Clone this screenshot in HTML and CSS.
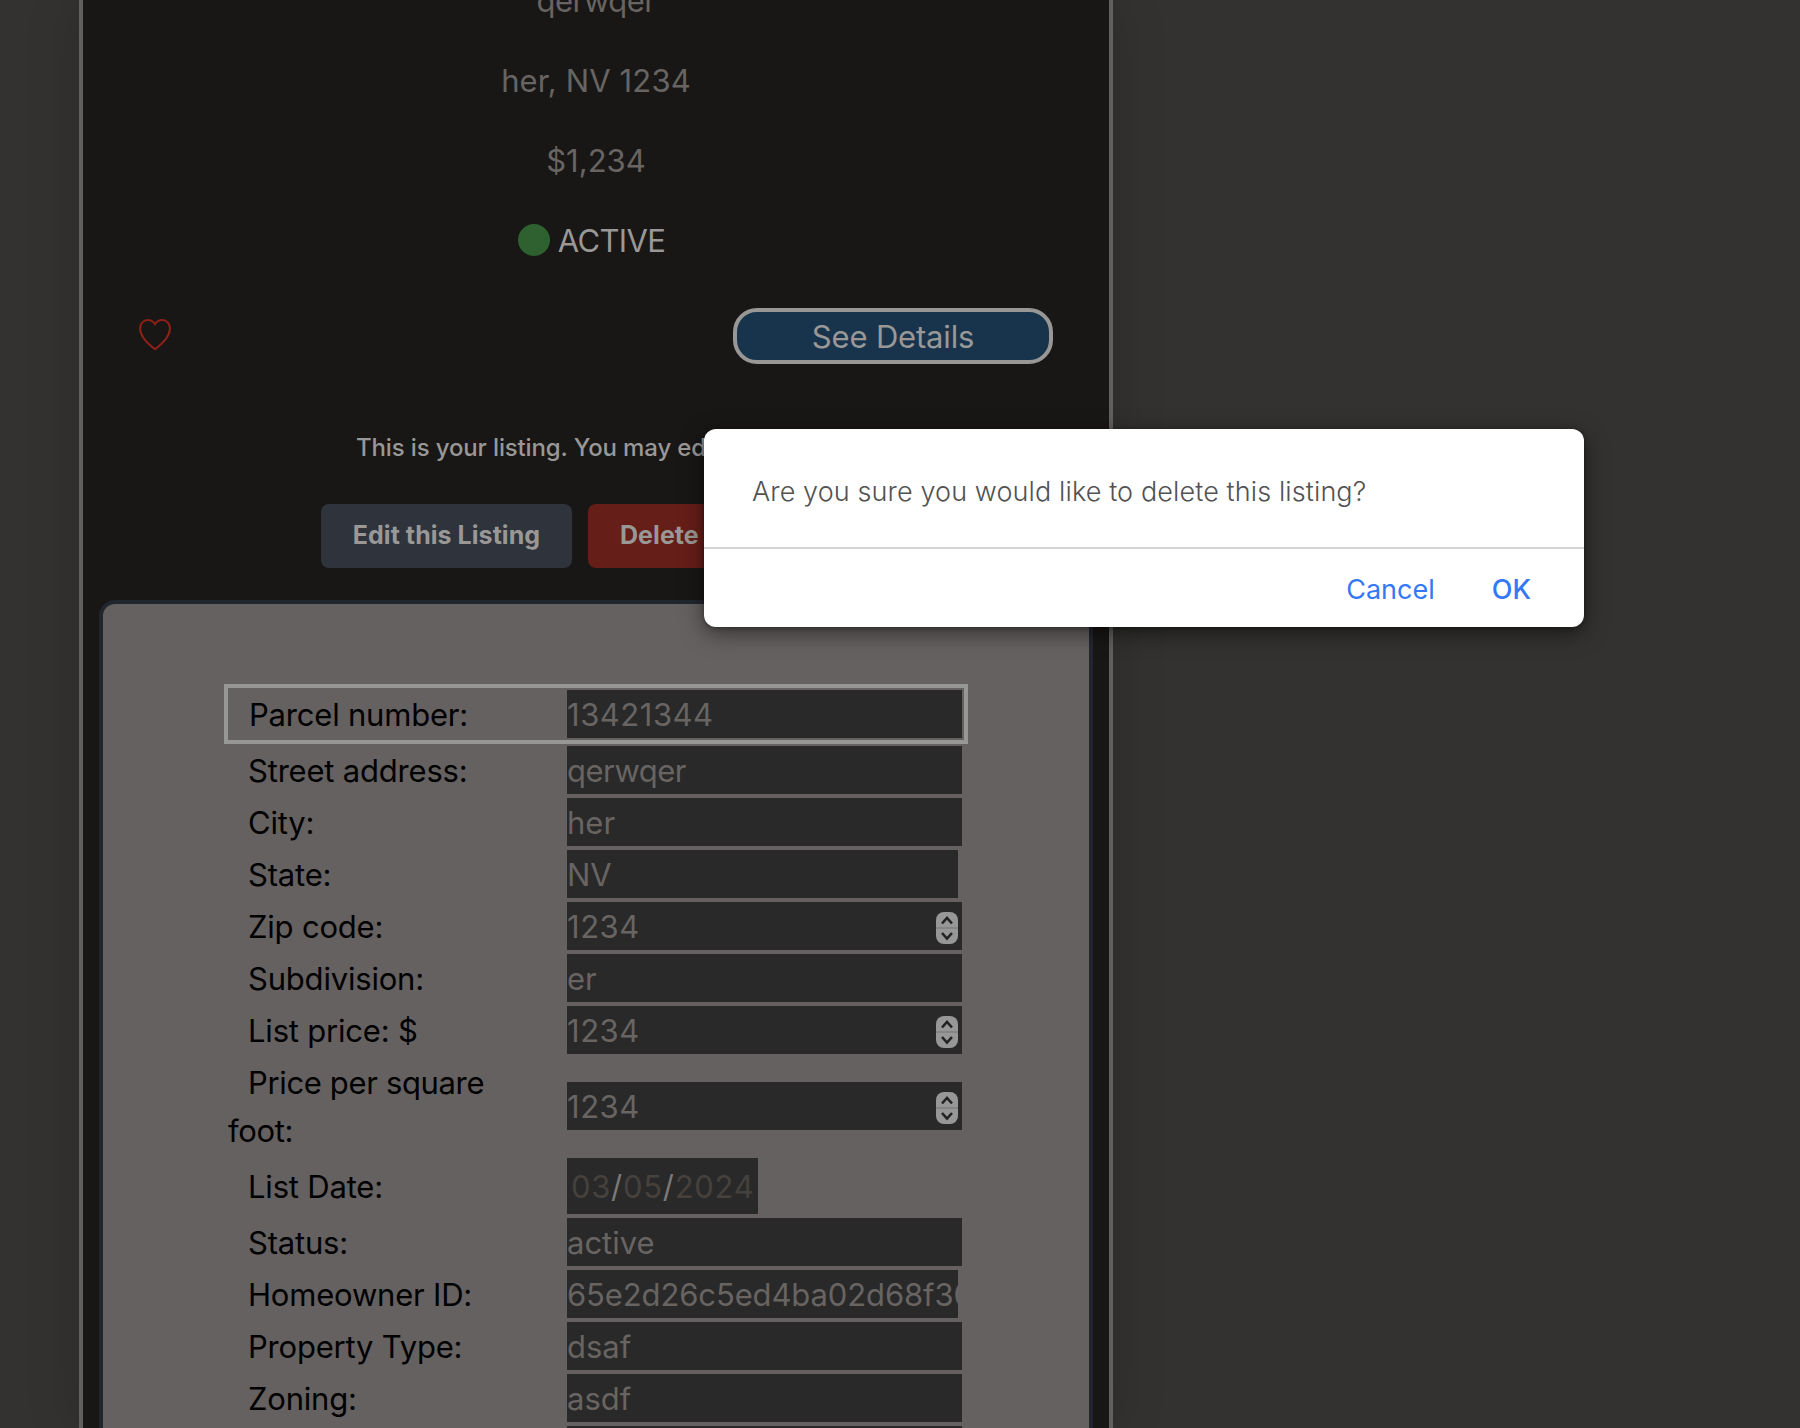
FILE: index.html
```
<!DOCTYPE html>
<html lang="en">
<head>
<meta charset="utf-8">
<title>Listing</title>
<link rel="stylesheet" href="styles.css">
</head>
<body>
<main class="card">
  <section class="summary">
    <p class="tight">qerwqer</p>
    <p class="place">her, NV 1234</p>
    <p>$1,234</p>
    <p class="status"><span class="dot"></span><span>ACTIVE</span></p>
  </section>
  <div class="actions">
    <svg class="heart" viewBox="0 0 34 34" width="34" height="34"><path d="M17 32.2 C12.5 28.8 2.1 20.5 2.1 11.4 C2.1 6.4 5.4 3 9.8 3 C13 3 15.5 4.6 17 7.2 C18.5 4.6 21 3 24.2 3 C28.6 3 31.9 6.4 31.9 11.4 C31.9 20.5 21.5 28.8 17 32.2 Z"/></svg>
    <button class="details">See Details</button>
  </div>
  <p class="note"><span>This is your listing. You may edit or delete it.</span></p>
  <div class="owner">
    <button class="btn edit">Edit this Listing</button>
    <button class="btn delete">Delete this Listing</button>
  </div>
  <form class="form">
    <div class="row focused"><label>Parcel number:</label><span class="field num">13421344</span></div>
    <div class="row"><label>Street address:</label><span class="field tight">qerwqer</span></div>
    <div class="row"><label>City:</label><span class="field">her</span></div>
    <div class="row"><label>State:</label><span class="field short">NV</span></div>
    <div class="row"><label>Zip code:</label><span class="field num">1234<svg class="spin" viewBox="0 0 22 32"><rect width="22" height="32" rx="8"/><path class="split" d="M0 16H22"/><path d="M6 11.5L11 6L16 11.5M6 21L11 26.5L16 21"/></svg></span></div>
    <div class="row"><label>Subdivision:</label><span class="field">er</span></div>
    <div class="row"><label>List price: $</label><span class="field num">1234<svg class="spin" viewBox="0 0 22 32"><rect width="22" height="32" rx="8"/><path class="split" d="M0 16H22"/><path d="M6 11.5L11 6L16 11.5M6 21L11 26.5L16 21"/></svg></span></div>
    <div class="row"><label class="long">Price per square<br>foot:</label><span class="field num">1234<svg class="spin" viewBox="0 0 22 32"><rect width="22" height="32" rx="8"/><path class="split" d="M0 16H22"/><path d="M6 11.5L11 6L16 11.5M6 21L11 26.5L16 21"/></svg></span></div>
    <div class="row"><label>List Date:</label><span class="field date">03<i>/</i>05<i>/</i>2024</span></div>
    <div class="row"><label>Status:</label><span class="field">active</span></div>
    <div class="row"><label>Homeowner ID:</label><span class="field short id">65e2d26c5ed4ba02d68f30</span></div>
    <div class="row"><label>Property Type:</label><span class="field">dsaf</span></div>
    <div class="row"><label>Zoning:</label><span class="field">asdf</span></div>
    <div class="row"><label></label><span class="field"></span></div>
  </form>
</main>
<div class="dialog" role="alertdialog">
  <p class="question">Are you sure you would like to delete this listing?</p>
  <div class="choices"><button>Cancel</button><button class="ok">OK</button></div>
</div>
</body>
</html>
```
FILE: styles.css
```
* { box-sizing: border-box; }
html, body { height: 100%; }
body {
  margin: 0;
  overflow: hidden;
  position: relative;
  background: #333230;
  color: #686462;
  font: 420 31px/48px Inter, "Noto Sans", sans-serif;
}
p { margin: 0; }
button { border: 0; margin: 0; padding: 0; background: none; font: inherit; color: inherit; white-space: nowrap; }

.card {
  width: 1034px;
  height: 1428px;
  margin-left: 79px;
  border: solid #61605f;
  border-width: 0 4px;
  background: #181715;
  box-shadow: 0 0 50px rgba(0, 0, 0, .16);
  overflow: hidden;
}
.summary { display: flex; flex-direction: column; align-items: center; gap: 32px; margin-top: -23px; }
.place { letter-spacing: .15px; }
.status { display: flex; align-items: center; gap: 8px; padding-right: 9px; color: #999897; letter-spacing: -.65px; }
.dot { width: 32px; height: 32px; margin-bottom: 2px; border-radius: 50%; background: #2e6030; }

.actions { display: flex; justify-content: space-between; align-items: center; height: 56px; margin: 43px 56px 0 55px; }
.heart { display: block; margin-bottom: 4px; fill: none; stroke: #8e2018; stroke-width: 2; }
.details {
  width: 320px;
  height: 56px;
  padding-top: 1px;
  border: 4px solid #999795;
  border-radius: 24px;
  background: #18344d;
  color: #999897;
  letter-spacing: -.18px;
}
.note { width: 478px; margin: 60px 0 0 273px; color: #999897; font-size: 24px; font-weight: 450; letter-spacing: -.14px; white-space: nowrap; }
.owner { display: flex; gap: 16px; margin: 32px 0 0 238px; }
.btn { height: 64px; padding: 0 0 2px; border-radius: 8px; color: #999897; font-size: 25px; font-weight: 700; letter-spacing: .05px; }
.edit { width: 251px; background: #2f333b; }
.delete { width: 283px; background: #661e18; }

.form {
  width: 994px;
  height: 900px;
  margin: 32px 0 0 16px;
  padding: 80px 0 0 121px;
  border: 4px solid #22272f;
  border-radius: 16px;
  background: #656160;
}
.row { display: grid; grid-template-columns: 339px 395px; align-items: center; padding: 2px 0 2px 4px; }
.focused { width: 744px; border: 4px solid #979796; padding-left: 0; }
label { margin-bottom: -1px; padding-top: 1px; color: #000; text-indent: 20px; letter-spacing: -.2px; }
.focused label { padding-left: 1px; }
.long { letter-spacing: -.35px; }
.field {
  display: flex;
  align-items: center;
  width: 395px;
  height: 48px;
  padding-top: 2px;
  overflow: hidden;
  background: #292929;
  white-space: nowrap;
}
.num { letter-spacing: .52px; }
.tight { letter-spacing: -.5px; }
.short { width: 391px; }
.id { letter-spacing: -.12px; }
.date { width: 191px; height: 56px; padding-left: 4px; color: #46413d; letter-spacing: .7px; }
.date i { font-style: normal; color: #7b7876; }
.spin { width: 22px; height: 32px; margin: 2px 4px 0 auto; fill: none; stroke: #222; stroke-width: 2.6; }
.spin rect { fill: #979797; stroke: none; }
.spin .split { stroke: #858585; stroke-width: 2; }

.dialog {
  position: absolute;
  left: 704px;
  top: 429px;
  width: 880px;
  height: 198px;
  border-radius: 12px;
  background: #fff;
  box-shadow: 0 6px 22px rgba(0, 0, 0, .5), 0 1px 4px rgba(0, 0, 0, .3);
  font-size: 27px;
}
.question { height: 120px; padding: 39px 48px 0; border-bottom: 2px solid #d3d3d3; color: #525252; font-weight: 360; letter-spacing: .11px; white-space: nowrap; }
.choices { display: flex; justify-content: flex-end; gap: 57px; padding: 17px 53px 0 0; color: #3478f6; font-weight: 400; }
.ok { font-weight: 500; }
```
